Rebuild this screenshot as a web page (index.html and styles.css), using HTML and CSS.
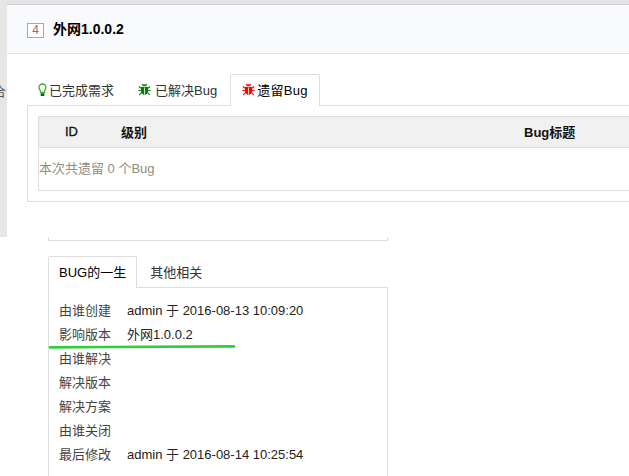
FILE: index.html
```html
<!DOCTYPE html>
<html lang="zh-CN">
<head>
    <meta charset="UTF-8"/>
    <title>外网1.0.0.2</title>
    <link rel="stylesheet" href="styles.css">
</head>
<body>
<!-- 上半部分：版本详情截图 -->
<section class="build">
    <aside class="side"><span class="side-char">合</span></aside>
    <div class="build-main">
        <header class="build-head">
            <span class="build-id">4</span>
            <strong class="build-name">外网1.0.0.2</strong>
        </header>
        <div class="build-body">
            <ul class="tabs">
                <li class="tab">
                    <svg class="icon" viewBox="0 0 9 14"><path d="M4.500 1C2.500 1 1 2.500 1 4.400c0 1.600 1.100 2.300 1.500 3.800v1.300h4V8.200C6.900 6.700 8 6 8 4.400 8 2.500 6.500 1 4.500 1z" fill="#fff" stroke="#47a832" stroke-width="1.300"/><path d="M2.700 10.300h3.600v2.700H2.700z" fill="#0d5f12"/></svg>已完成需求
                </li>
                <li class="tab tab-bug">
                    <svg class="icon icon-bug" viewBox="0 0 13 13"><use href="#bug"/></svg>已解决Bug
                </li>
                <li class="tab tab-on tab-red">
                    <svg class="icon icon-bug" viewBox="0 0 13 13"><use href="#bug"/></svg>遗留Bug
                </li>
            </ul>
            <div class="tab-panel">
                <div class="bug-table">
                    <div class="bug-row-head">
                        <span class="col-id">ID</span>
                        <span class="col-level">级别</span>
                        <span class="col-title">Bug标题</span>
                    </div>
                    <p class="bug-summary">本次共遗留 0 个Bug</p>
                </div>
            </div>
        </div>
    </div>
</section>

<!-- 下半部分：Bug 信息截图 -->
<section class="life">
    <div class="life-stub"></div>
    <ul class="tabs life-tabs">
        <li class="tab tab-on">BUG的一生</li>
        <li class="tab">其他相关</li>
    </ul>
    <dl class="life-panel">
        <div class="life-row"><dt>由谁创建</dt><dd>admin 于 2016-08-13 10:09:20</dd></div>
        <div class="life-row"><dt>影响版本</dt><dd>外网1.0.0.2</dd></div>
        <div class="life-row"><dt>由谁解决</dt><dd></dd></div>
        <div class="life-row"><dt>解决版本</dt><dd></dd></div>
        <div class="life-row"><dt>解决方案</dt><dd></dd></div>
        <div class="life-row"><dt>由谁关闭</dt><dd></dd></div>
        <div class="life-row"><dt>最后修改</dt><dd>admin 于 2016-08-14 10:25:54</dd></div>
    </dl>
    <!-- 手绘的绿色标注线 -->
    <svg class="mark" viewBox="0 0 190 4"><path d="M2 2.400 L60 2 L186 1.400" stroke="#2fcf3c" stroke-width="2.600" stroke-linecap="round" fill="none"/></svg>
</section>

<svg class="defs" width="0" height="0">
    <symbol id="bug" viewBox="0 0 13 13">
        <path d="M4.500 3.200a2 2 0 0 1 4 0z" fill="currentColor"/>
        <path d="M3.500 4h6c.4 0 .7.300.7.700V8c0 2-1.600 3.700-3.700 3.700S2.800 10 2.800 8V4.700c0-.4.300-.7.700-.7z" fill="currentColor"/>
        <path d="M6.500 4.500v7" stroke="#fff" stroke-width=".8"/>
        <path d="M4 1l1.300 1.500M9 1L7.700 2.500M2.800 5L.8 3.500M10.200 5l2-1.500M2.800 7.500H.5M10.200 7.500h2.300M3.200 10l-2 1.800M9.800 10l2 1.800" stroke="currentColor" stroke-width="1.100" fill="none"/>
    </symbol>
</svg>
</body>
</html>
```

FILE: styles.css
```css
* {
    margin: 0;
    padding: 0;
    box-sizing: border-box;
}

body {
    font-family: "Liberation Sans", "Noto Sans CJK SC", sans-serif;
    font-size: 13px;
    color: #333;
    background-color: #fff;
    width: 629px;
    height: 476px;
    overflow: hidden;
    position: relative;
}

.defs {
    position: absolute;
}

/* 上半部分 */
.build {
    display: flex;
    height: 237px;
}

.side {
    width: 7px;
    flex: none;
    background-color: #e6e6e6;
    overflow: hidden;
    padding-top: 84px;
}

.side-char {
    display: block;
    width: 14px;
    margin-left: -7px;
    color: #555;
    line-height: 16px;
}

.build-main {
    flex: 1;
    background-color: #fff;
    border-top: 4px solid #e3e3e3;
}

.build-head {
    display: flex;
    align-items: flex-start;
    height: 50px;
    padding: 18px 0 0 20px;
    background-color: #f9fafe;
    border-top: 1px solid #cfcfcf;
    border-bottom: 1px solid #e3e3e3;
}

.build-id {
    width: 17px;
    height: 15px;
    line-height: 13px;
    text-align: center;
    font-size: 12px;
    color: #a06a5c;
    border: 1px solid #a9a9a9;
    background-color: #fff;
}

.build-name {
    margin: -3px 0 0 9px;
    line-height: 18px;
    font-size: 14px;
    color: #000;
}

.build-body {
    padding: 20px 0 0 20px;
}

/* 页签 */
.tabs {
    display: flex;
    list-style: none;
    height: 32px;
    position: relative;
    z-index: 1;
}

.tab {
    display: flex;
    align-items: center;
    height: 32px;
    padding: 0 10px 2px;
    border: 1px solid transparent;
    border-bottom: 0;
    color: #333;
    white-space: nowrap;
}

.tab-on {
    background-color: #fff;
    border-color: #ddd;
    border-radius: 2px 2px 0 0;
    color: #000;
}

.tab-bug {
    padding-left: 12px;
}

.tab-red {
    margin-left: 2px;
    padding: 0 11px 2px;
    letter-spacing: 0.3px;
}

.icon {
    width: 9px;
    height: 14px;
    margin-right: 2px;
    flex: none;
}

.icon-bug {
    width: 13px;
    height: 13px;
    margin-right: 4px;
    color: #0a7a0a;
}

.tab-red .icon-bug {
    margin-right: 2px;
    color: #f00;
}

.tab-panel {
    margin-top: -1px;
    height: 97px;
    padding: 10px 0 0 10px;
    border: 1px solid #ddd;
    border-right: 0;
}

.bug-table {
    height: 75px;
    border: 1px solid #ddd;
    border-right: 0;
}

.bug-row-head {
    display: flex;
    align-items: center;
    height: 31px;
    padding-bottom: 1px;
    background-color: #f1f1f1;
    border-bottom: 1px solid #ddd;
    font-weight: bold;
    color: #111;
}

.col-id {
    width: 82px;
    padding-left: 26px;
    font-weight: normal;
    -webkit-text-stroke: 0.3px #111;
}

.col-level {
    width: 403px;
}

.bug-summary {
    line-height: 42px;
    color: #918c85;
}

/* 下半部分 */
.life {
    padding-left: 48px;
    width: 388px;
}

.life-stub {
    height: 4px;
    border: 1px solid #ddd;
    border-top: 0;
}

.life-tabs {
    margin-top: 15px;
}

.life-tabs .tab {
    padding: 0 10px 2px;
}

.life-tabs .tab + .tab {
    padding-left: 12px;
}

.life-panel {
    margin-top: -1px;
    height: 200px;
    padding-top: 11px;
    border: 1px solid #ddd;
}

.life-row {
    display: flex;
    height: 24px;
    line-height: 24px;
    padding-left: 10px;
}

.life-row dt {
    width: 68px;
    flex: none;
    color: #444;
}

.life-row dd {
    color: #222;
}

.mark {
    position: absolute;
    left: 48px;
    top: 345px;
    width: 190px;
    height: 4px;
}
```
